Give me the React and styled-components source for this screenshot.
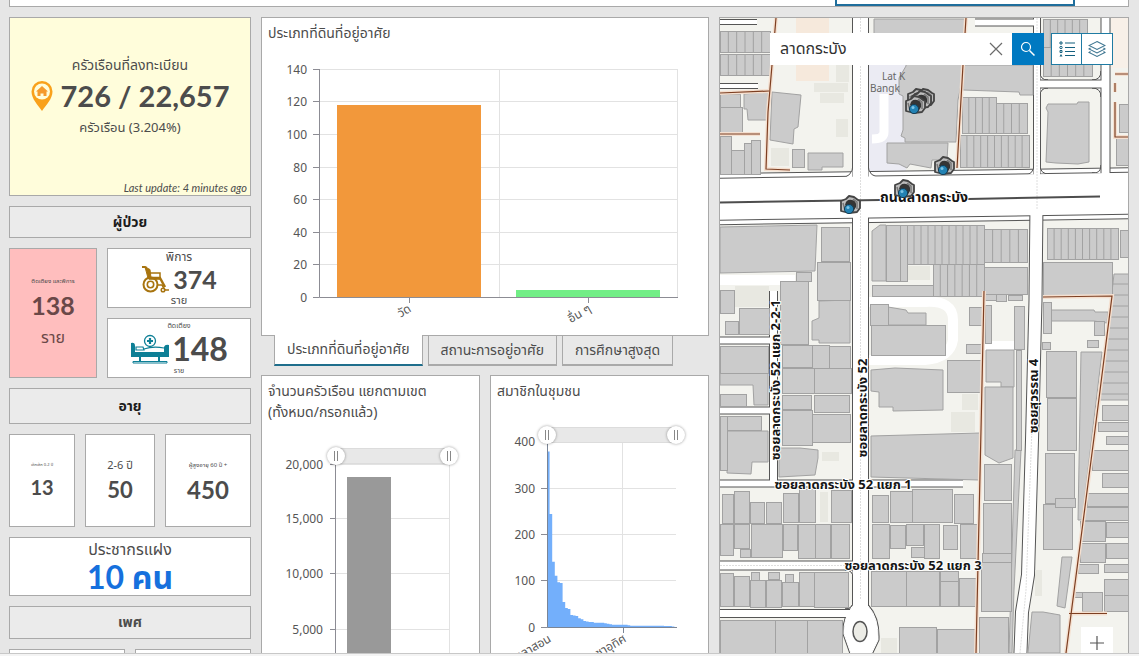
import React, { useState } from 'react';
import styled, { createGlobalStyle } from 'styled-components';

const GlobalStyle = createGlobalStyle`
  * { box-sizing: border-box; }
  body {
    margin: 0;
    background: #e6e6e6;
    color: #4c4c4c;
    font-family: 'Noto Sans', 'Noto Sans Thai', Tahoma, sans-serif;
    font-size: 14px;
  }
  button, input { font: inherit; color: inherit; }
`;

const Shell = styled.div`
  height: 100vh;
  display: flex;
  flex-direction: column;
  overflow: hidden;
`;

const TopBar = styled.header`
  flex: none;
  display: flex;
  justify-content: flex-end;
  height: 7px;
  margin: 0 10px 0 9px;
  padding-right: 53px;
  background: #fff;
  border: 1px solid #a9a9a9;
  border-top: none;
`;

const TopBarFrame = styled.div`
  width: 240px;
  border: 2px solid #1f6e9c;
  border-top: none;
`;

const BottomBar = styled.footer`
  flex: none;
  height: 3px;
  background: #f4f4f4;
  border-top: 1px solid #c8c8c8;
`;

const Board = styled.main`
  flex: 1;
  min-height: 0;
  display: grid;
  grid-template-columns: 242fr 448fr 410fr;
  grid-template-rows: 100%;
  gap: 10px;
  padding: 10px 10px 0 9px;
  overflow: hidden;
`;

const Column = styled.section`
  display: flex;
  flex-direction: column;
  gap: ${props => props.$gap}px;
  min-width: 0;
`;

const CardRow = styled.div`
  display: grid;
  flex: none;
  grid-template-columns: ${props => props.$columns};
  gap: 10px;
`;

const Card = styled.div`
  flex: none;
  display: flex;
  flex-direction: column;
  align-items: center;
  justify-content: center;
  min-height: ${props => props.$height}px;
  background: ${props => props.$fill || '#fff'};
  border: 1px solid #a9a9a9;
  overflow: hidden;
  white-space: nowrap;
`;

const AgeCard = styled(Card)`
  padding-bottom: 4px;
`;

const SectionHeading = styled.h2`
  flex: none;
  display: flex;
  align-items: center;
  justify-content: center;
  height: ${props => props.$height}px;
  margin: 0;
  background: #ebebeb;
  border: 1px solid #a9a9a9;
  color: ${props => props.$color || '#1c1c1c'};
  font-size: 14px;
  font-weight: 700;
`;

const CardBody = styled.div`
  flex: 1;
  display: flex;
  flex-direction: column;
  align-items: center;
  justify-content: center;
  padding-bottom: 6px;
`;

const Caption = styled.div`
  font-size: ${props => props.$size}px;
  line-height: ${props => props.$line}px;
  color: ${props => props.$color || 'inherit'};
`;

const Figure = styled.div`
  display: flex;
  align-items: center;
  gap: ${props => props.$gap || 4}px;
  color: ${props => props.$color || 'inherit'};
  font-family: Lato, 'Noto Sans Thai', Tahoma, sans-serif;
  font-size: ${props => props.$size}px;
  line-height: ${props => props.$line}px;
  font-weight: 700;
`;

const UpdatedAt = styled.div`
  align-self: flex-end;
  padding-right: 3px;
  font-family: Lato, sans-serif;
  font-size: 11px;
  font-style: italic;
  line-height: 15px;
`;

const Panel = styled.div`
  position: relative;
  flex: none;
  background: #fff;
  border: 1px solid #a9a9a9;
`;

const PanelTitle = styled.h3`
  margin: 0;
  height: ${props => props.$height}px;
  padding: 4px 6px 0;
  font-size: 14px;
  font-weight: 400;
  line-height: 21px;
`;

const Chart = styled.svg`
  display: block;
  width: 100%;
  font-family: 'Noto Sans', 'Noto Sans Thai', Tahoma, sans-serif;
  font-size: 12px;
  fill: #555;
`;

const TabList = styled.div`
  flex: none;
  position: relative;
  display: flex;
  gap: 5px;
  height: 31px;
  margin: -1px 0 9px;
  padding-left: 13px;
`;

const Tab = styled.button`
  padding: 0 12px;
  border: 0 solid #a9a9a9;
  border-width: ${props => (props.$active ? '0 1px 2px' : '1px 1px 2px')};
  border-bottom-color: ${props => (props.$active ? '#1f6e8c' : '#a9a9a9')};
  background: ${props => (props.$active ? '#fff' : '#e8e8e8')};
  font-size: 14px;
  white-space: nowrap;
  cursor: pointer;
`;

const ChartRow = styled.div`
  display: grid;
  grid-template-columns: 1fr 1fr;
  gap: 10px;
`;

const RangeTrack = styled.div`
  position: absolute;
  top: ${props => props.$top}px;
  left: ${props => props.$left}px;
  right: ${props => props.$right}px;
  height: 18px;

  &::before {
    content: '';
    position: absolute;
    inset: 1px 9px;
    background: #e8e8e8;
    border: 1px solid #dcdcdc;
  }
`;

const RangeInput = styled.input`
  position: absolute;
  inset: 0;
  width: 100%;
  height: 18px;
  margin: 0;
  appearance: none;
  background: transparent;
  pointer-events: none;

  &::-webkit-slider-thumb {
    appearance: none;
    width: 18px;
    height: 18px;
    border-radius: 50%;
    background:
      linear-gradient(#888, #888) 7px 4px / 1px 10px no-repeat,
      linear-gradient(#888, #888) 10px 4px / 1px 10px no-repeat,
      #fff;
    box-shadow: 0 0 3px rgba(0, 0, 0, 0.4);
    pointer-events: auto;
    cursor: pointer;
  }
`;

const MapFrame = styled.section`
  position: relative;
  min-width: 0;
  border: 1px solid #a9a9a9;
  border-bottom: none;
  overflow: hidden;
`;

const MapSvg = styled.svg`
  display: block;
  width: 100%;
  height: 100%;
`;

const MapTools = styled.div`
  position: absolute;
  top: 15px;
  right: 15px;
  display: flex;
  gap: 7px;
`;

const SearchForm = styled.form`
  display: flex;
  height: 32px;
  background: #fff;
`;

const SearchInput = styled.input`
  width: 210px;
  border: none;
  padding: 0 10px;
  background: transparent;
  outline: none;
  font-size: 16px;
  color: #323232;
`;

const IconButton = styled.button`
  display: flex;
  align-items: center;
  justify-content: center;
  width: ${props => props.$width || 32}px;
  height: 32px;
  padding: 0;
  border: ${props => (props.$outlined ? '1px solid #1f7ba3' : 'none')};
  background: ${props => (props.$primary ? '#0079c1' : '#fff')};
  cursor: pointer;

  & + & {
    border-left: none;
  }
`;

const ToolGroup = styled.div`
  display: flex;
`;

const ZoomButton = styled(IconButton)`
  position: absolute;
  right: 15px;
  bottom: -6px;
`;

const PinIcon = () => (
  <svg width="22" height="30" viewBox="0 0 22 30">
    <path d="M11 0a10.500 10.500 0 0 0-10.500 10.500C.5 18 7 24 11 30c4-6 10.500-12 10.500-19.500A10.500 10.500 0 0 0 11 0z" fill="#f9a11b" />
    <circle cx="11" cy="10.500" r="8" fill="#fffddb" />
    <path d="M11 5l6 5.500h-1.500V15h-3v-2.500h-3V15h-3v-4.500H5z" fill="#f59a2c" />
  </svg>
);

const WheelchairIcon = () => (
  <svg width="28" height="28" viewBox="0 0 28 28" fill="none" stroke="#a8740f">
    <path d="M1 2h3l2 1" strokeWidth="2" />
    <path d="M4 2l3 11h3L9 4.500z" fill="#a8740f" />
    <path d="M9 8h10v6H8" strokeWidth="1.500" />
    <path d="M7 13h13" strokeWidth="2.500" />
    <path d="M19 13l5 9" strokeWidth="2.500" />
    <circle cx="9.500" cy="19.500" r="7" strokeWidth="2" />
    <circle cx="9.500" cy="19.500" r="3.200" strokeWidth="1.600" />
    <path d="M16 20h5l3 5h4" strokeWidth="1.500" />
    <circle cx="22" cy="25" r="1.800" strokeWidth="1.500" />
  </svg>
);

const BedIcon = () => (
  <svg width="40" height="30" viewBox="0 0 40 30" fill="none" stroke="#0d7f96">
    <circle cx="20" cy="7" r="5.500" strokeWidth="1.300" />
    <path d="M20 4v6M17 7h6" strokeWidth="2.200" />
    <path d="M1 9q4-1 4 3v6h29v-5q1-3 5-2v12H1z" fill="#0d7f96" stroke="none" />
    <path d="M6 16v-3h7l1 3zM14 15q9-3 20-1" strokeWidth="1.200" />
    <path d="M10 23v4M29 23v4" strokeWidth="2" />
    <path d="M3 27.500h34v1.500H3z" strokeWidth="1" />
  </svg>
);

const CloseIcon = () => (
  <svg width="14" height="14" viewBox="0 0 14 14" stroke="#6b6b6b" strokeWidth="1.200">
    <path d="M1 1l12 12M13 1L1 13" />
  </svg>
);

const SearchIcon = () => (
  <svg width="16" height="16" viewBox="0 0 16 16" fill="none" stroke="#fff" strokeWidth="1.200">
    <circle cx="6" cy="6" r="4.500" />
    <path d="M9.500 9.500l5 5" strokeWidth="1.500" />
  </svg>
);

const LegendIcon = () => (
  <svg width="16" height="16" viewBox="0 0 16 16" fill="none" stroke="#14607f">
    <path d="M6 2h10M6 6.500h10M6 10.500h10M6 14.500h10" strokeWidth="1.100" />
    <path d="M1 1h2v2H1zM1 9.500h2v2H1z" />
    <circle cx="2" cy="6.500" r="1.200" />
    <path d="M.5 15.500L2 13l1.500 2.500z" fill="#14607f" stroke="none" />
  </svg>
);

const LayersIcon = () => (
  <svg width="18" height="18" viewBox="0 0 18 18" fill="none" stroke="#3d7590" strokeWidth="1.100">
    <path d="M9 1.500l8 4-8 4-8-4zM2.500 8L1 9l8 4 8-4-1.500-1M2.500 11.500L1 12.500l8 4 8-4-1.500-1" />
  </svg>
);

const PlusIcon = () => (
  <svg width="16" height="16" viewBox="0 0 16 16" stroke="#555" strokeWidth="1.200">
    <path d="M8 1v14M1 8h14" />
  </svg>
);

const LAND_TICKS = [0, 20, 40, 60, 80, 100, 120, 140];

const LandChart = () => {
  const y = value => Math.round(297 - value * 1.63);
  return (
    <Chart viewBox="262 50 446 285" role="img" aria-label="ประเภทที่ดินที่อยู่อาศัย">
      {LAND_TICKS.map(tick => (
        <g key={tick}>
          <path d={`M319 ${y(tick) + 0.5}H678`} stroke="#e2e2e2" />
          <path d={`M313 ${y(tick) + 0.5}h6`} stroke="#8c8c94" />
          <text x="307" y={y(tick) + 5} textAnchor="end">{tick}</text>
        </g>
      ))}
      <path d="M499.500 69V297M677.500 69V297" stroke="#e2e2e2" />
      <rect x="337" y="105" width="144" height="192" fill="#f2983b" />
      <rect x="516" y="290" width="144" height="7" fill="#72ee86" />
      <path d="M319.500 69V297.500H678M409.500 298v5M588.500 298v5" fill="none" stroke="#8c8c94" />
      <text transform="translate(412 311) rotate(-30)" textAnchor="end">วัด</text>
      <text transform="translate(592 311) rotate(-30)" textAnchor="end">อื่น ๆ</text>
    </Chart>
  );
};

const HOUSEHOLD_TICKS = [
  { label: '20,000', y: 464 },
  { label: '15,000', y: 518 },
  { label: '10,000', y: 573 },
  { label: '5,000', y: 629 },
];

const HouseholdChart = () => (
  <Chart viewBox="262 424 217 276" role="img" aria-label="จำนวนครัวเรือน แยกตามเขต">
    {HOUSEHOLD_TICKS.map(tick => (
      <g key={tick.label}>
        <path d={`M336 ${tick.y + 0.5}h113`} stroke="#e2e2e2" />
        <path d={`M330 ${tick.y + 0.5}h6`} stroke="#8c8c94" />
        <text x="323" y={tick.y + 5} textAnchor="end">{tick.label}</text>
      </g>
    ))}
    <path d="M449.500 464V684" stroke="#e2e2e2" />
    <rect x="347" y="477" width="44" height="207" fill="#999" />
    <path d="M335.500 464V684" stroke="#8c8c94" />
  </Chart>
);

const MEMBERS = [
  380, 245, 142, 112, 98, 96, 55, 42, 40, 27, 26, 25, 20, 18, 14, 13, 12, 12,
  10, 10, 10, 10, 9, 8, 7, 6, 6, 6, 6, 6, 6, 5, 4, 4, 4, 4, 4, 4, 4, 4, 4, 4,
  4, 4, 4, 3, 3, 3, 2, 1,
];

const MemberChart = () => {
  const y = value => 627.5 - value * 0.463;
  const area = MEMBERS.map((value, i) => `V${y(value)}H${547 + (i + 1) * 2.6}`).join('');
  return (
    <Chart viewBox="491 403 217 297" role="img" aria-label="สมาชิกในชุมชน">
      {[0, 100, 200, 300, 400].map(tick => (
        <g key={tick}>
          <path d={`M547 ${Math.round(y(tick)) - 0.5}h129`} stroke="#e2e2e2" />
          <path d={`M541 ${Math.round(y(tick)) - 0.5}h6`} stroke="#8c8c94" />
          <text x="535" y={Math.round(y(tick)) + 4} textAnchor="end">{tick}</text>
        </g>
      ))}
      <path d="M622.500 442V627" stroke="#e2e2e2" />
      <path d={`M547 627.5${area}V627.5z`} fill="#73affb" />
      <path d="M547.500 442V627.500H677M623.500 628v5" fill="none" stroke="#7a8596" />
      <text transform="translate(552 641) rotate(-30)" textAnchor="end">ศาลาสอน</text>
      <text transform="translate(627 641) rotate(-30)" textAnchor="end">ประชาอุทิศ</text>
    </Chart>
  );
};

// x, y, width, height
const BUILDINGS = [
  [720, 94, 20, 13], [720, 107, 22, 26], [720, 136, 11, 38], [731, 150, 13, 24], [744, 143, 7, 31], [751, 140, 9, 34],
  [792, 149, 12, 18], [1119, 104, 10, 28], [1116, 138, 13, 27],
  [821, 227, 28, 34], [817, 262, 33, 38], [796, 272, 15, 9], [780, 281, 28, 63], [720, 290, 14, 23],
  [739, 308, 30, 26], [725, 321, 13, 13], [720, 346, 48, 27], [720, 394, 26, 12], [782, 345, 30, 22],
  [812, 345, 17, 23], [829, 346, 21, 22], [782, 368, 32, 25], [814, 368, 37, 25], [782, 395, 29, 14],
  [814, 395, 35, 17], [720, 416, 7, 54], [727, 416, 34, 14], [782, 410, 30, 35], [812, 414, 38, 28],
  [886, 225, 14, 56], [900, 225, 7, 56], [872, 285, 61, 11], [984, 267, 43, 27], [985, 294, 11, 6],
  [996, 294, 10, 7], [1008, 295, 14, 5], [870, 304, 18, 21], [871, 325, 74, 30], [969, 307, 14, 18],
  [966, 344, 16, 9], [947, 360, 34, 32], [985, 305, 6, 38], [1014, 306, 10, 43], [1016, 350, 5, 100],
  [1120, 230, 9, 27], [1043, 262, 69, 34], [1043, 302, 8, 31], [1094, 321, 10, 14], [1087, 340, 11, 7],
  [1042, 342, 8, 7], [1046, 351, 30, 46], [1047, 398, 29, 52], [1102, 405, 27, 15], [1098, 422, 31, 9],
  [1106, 436, 23, 8], [1092, 450, 37, 20], [1102, 473, 27, 14], [1087, 493, 42, 13], [1084, 507, 45, 13],
  [1080, 521, 25, 20], [1106, 522, 23, 15], [1080, 543, 25, 19], [1106, 543, 23, 15], [1078, 564, 20, 9],
  [1104, 564, 25, 8], [1104, 579, 25, 16], [1072, 592, 10, 5], [1082, 592, 20, 19], [1104, 595, 25, 16],
  [1045, 453, 29, 50], [1043, 504, 29, 45], [1055, 498, 20, 9], [984, 464, 27, 36], [983, 503, 28, 50],
  [982, 553, 29, 9], [981, 562, 30, 49], [979, 617, 29, 36],
  [722, 494, 11, 29], [734, 491, 15, 32], [750, 502, 14, 21], [766, 502, 15, 21], [783, 493, 15, 29],
  [799, 489, 16, 33], [831, 490, 20, 32], [720, 524, 13, 31], [734, 524, 15, 24], [751, 524, 31, 33],
  [783, 524, 14, 26], [798, 524, 17, 34], [815, 524, 15, 34], [831, 524, 18, 34], [740, 549, 10, 8],
  [720, 573, 13, 33], [734, 576, 15, 30], [750, 580, 15, 27], [766, 580, 15, 27], [782, 582, 16, 24],
  [799, 572, 15, 34], [814, 572, 34, 35], [751, 572, 8, 8], [768, 572, 11, 7], [785, 574, 8, 8],
  [720, 620, 55, 33], [775, 620, 32, 33], [807, 620, 35, 33],
  [872, 495, 16, 27], [890, 491, 22, 31], [912, 489, 40, 33], [954, 494, 19, 29], [872, 524, 17, 34],
  [890, 525, 15, 23], [906, 524, 17, 21], [924, 524, 15, 34], [943, 525, 14, 24], [960, 524, 17, 34],
  [911, 547, 13, 10], [871, 571, 35, 35], [906, 571, 33, 35], [940, 571, 18, 10], [940, 581, 18, 25],
  [959, 578, 17, 28], [899, 627, 37, 26], [937, 629, 38, 24],
];

const OUTLINES = [
  '744,94 768,92 767,120 748,120 747,109 744,109',
  '772,92 801,95 798,127 794,129 793,144 770,140',
  '808,153 843,153 843,167 822,167 822,170 808,170',
  '874,19 966,19 964,70 958,100 956,142 905,142 905,138 901,136 903,130 903,96 899,94 899,78 906,66 906,34 874,34',
  '887,143 948,143 947,160 932,160 931,168 910,164 907,168 899,164 887,163',
  '964,65 1033,65 1033,95 1020,95 1019,92 963,90',
  '1048,104 1077,104 1078,102 1089,102 1089,162 1078,164 1056,163 1046,162 1048,112 1046,108',
  '720,227 817,225 815,271 720,273',
  '819,301 850,300 850,343 819,343 819,340 812,340 812,321 819,318',
  '720,373 768,373 768,405 754,405 753,385 720,385',
  '727,431 768,431 768,462 752,462 751,474 727,473',
  '779,448 800,448 818,450 818,458 815,475 779,477',
  '872,231 880,225 886,225 886,281 872,281',
  '888,307 906,310 908,313 926,313 926,325 888,325',
  '871,370 895,368 943,370 943,410 893,411 893,407 879,407 879,392 871,391',
  '871,436 980,433 979,480 871,477',
  '986,350 1014,350 1014,387 1001,387 1001,382 986,382',
  '985,387 1013,387 1013,458 999,463 985,455',
  '1015,450 1021,450 1014,590 1012,653 1009,653',
  '1051,310 1094,310 1095,312 1108,312 1107,323 1094,321 1051,321',
  '1081,352 1102,352 1082,520 1078,520',
  '1062,557 1072,557 1065,608 1057,606',
  '1032,612 1043,612 1060,615 1060,653 1028,653',
  '1114,274 1129,274 1129,400 1100,400',
];

const PALE_BUILDINGS = [
  [814, 83, 34, 9], [820, 93, 24, 10], [836, 119, 12, 18], [836, 65, 13, 17], [771, 148, 18, 18],
  [822, 452, 17, 9], [735, 286, 34, 21], [783, 354, 12, 13], [900, 266, 30, 14], [962, 394, 16, 16],
  [951, 412, 24, 20], [820, 492, 8, 30], [881, 638, 16, 15], [1035, 570, 7, 26],
];

// x, y, width, height, number of units in the block
const TERRACES = [
  [720, 31, 50, 21, 6], [720, 54, 50, 21, 6], [962, 97, 34, 36, 5], [996, 103, 31, 30, 4],
  [960, 135, 69, 32, 10], [1043, 19, 44, 28, 6], [1043, 47, 49, 29, 6], [907, 225, 77, 39, 11],
  [984, 229, 43, 33, 5], [933, 264, 51, 32, 7], [1047, 228, 71, 31, 10],
];

const ROADS = [
  { d: 'M860.5 0V622', width: 15 },
  { d: 'M1037 0V190', width: 6 },
  { d: 'M1105.5 0V185', width: 8 },
  { d: 'M1037 84H1105', width: 7 },
  { d: 'M710 22H757', width: 4 },
  { d: 'M710 86H758', width: 4 },
  { d: 'M975 22.5H1036', width: 6 },
  { d: 'M773.5 291V484', width: 7 },
  { d: 'M710 340.5H771', width: 6 },
  { d: 'M710 410.5H771', width: 6 },
  { d: 'M710 483.5H963', width: 6 },
  { d: 'M710 565.5H856', width: 8 },
  { d: 'M710 613.5H856', width: 7 },
  { d: 'M853 606Q843 618 844 634L855 665H866L878 640Q879 618 868 606z', width: 1, fill: '#fff' },
  { d: 'M1036.5 205L1035.5 300L1032 440L1028 575L1022 612L1020 665', width: 12 },
];

// road kerbs that turn at the junctions
const CORNERS = [
  'M839 178Q853 178 853 164V178z',
  'M868 164Q868 178 882 177L868 178z',
  'M1024 175Q1034 175 1034 164V175z',
  'M1040 165Q1040 174 1049 174H1040z',
  'M1101 165Q1101 174 1092 173L1101 174z',
  'M1040 96Q1040 88 1048 88H1040z',
  'M1092 88Q1101 88 1101 97V88z',
  'M1040 72Q1040 80 1048 80H1040z',
  'M1092 80Q1101 80 1101 71V80z',
  'M845 570Q853 570 853 578V570z',
  'M845 609Q853 609 853 601V609z',
];

const BOUNDARIES = [
  'M776 18L768 112L766 169L790 170', 'M720 93L769 91', 'M720 134H760', 'M966 18L963 65L957 168',
  'M1129 74H1115M1115 83V92M1115 102V137H1129', 'M984 291L981 430L976 653',
  'M1043 297L1112 296L1095 430L1066 653', 'M1069 613.5H1107',
];

const STREET_LABELS = [
  { text: 'ถนนลาดกระบัง', x: 924, y: 202, size: 14 },
  { text: 'ซอยลาดกระบัง 52 แยก 1', x: 843, y: 489 },
  { text: 'ซอยลาดกระบัง 52 แยก 3', x: 913, y: 570 },
  { text: 'ซอยลาดกระบัง 52 แยก 2-2-1', x: 780, y: 380, angle: -90 },
  { text: 'ซอยลาดกระบัง 52', x: 867, y: 408, angle: -90 },
  { text: 'ซอยสุวรรณ 4', x: 1038, y: 396, angle: -90 },
];

const Camera = ({ x, y }) => (
  <g transform={`translate(${x} ${y})`}>
    <path d="M-9-4l5-2 3-3 5 1 4 3 2 1v7l-3 4-8 1-8-2z" fill="#bdbdbd" stroke="#444" strokeWidth="1.800" strokeLinejoin="round" />
    <path d="M-7-2l2 7M3-6l4 3v7" fill="none" stroke="#777" strokeWidth="1.500" />
    <path d="M-5 0q1-6 7-5 5 1 4 7L3 7z" fill="#353535" />
    <circle cx="-1" cy="4" r="4.600" fill="#2382b3" stroke="#173e55" />
    <circle cx="-2" cy="2.500" r="1.500" fill="#7cc4e6" />
  </g>
);

const StreetMap = () => (
  <MapSvg viewBox="720 18 409 635" preserveAspectRatio="xMinYMin slice" role="img" aria-label="แผนที่ลาดกระบัง">
    <rect x="700" y="0" width="450" height="680" fill="#f3f3ee" />
    <rect x="796" y="18" width="33" height="63" fill="#f6e9dc" />
    <rect x="868" y="34" width="38" height="140" fill="#ebebf3" />
    <path d="M884 94v38q0 7-12 7" fill="none" stroke="#fff" strokeWidth="9" />
    <path d="M1111 18h18v50h-18z" fill="#f8f0e8" />
    <g fill="none" stroke="#fff" strokeWidth="10">
      <path d="M720 280H795M868 302H925Q953 300 953 320V340Q950 358 925 360H868M984 346H1014" />
    </g>
    <g fill="none">
      <path d="M700 199.500L1150 193" stroke="#555" strokeWidth="52" />
      <path d="M700 199.500L1150 193" stroke="#fff" strokeWidth="50" />
      <path d="M700 199.500L1150 193" stroke="#555" strokeWidth="43" />
      {ROADS.map(road => (
        <path key={road.d} d={road.d} stroke="#555" strokeWidth={road.width + 2} />
      ))}
      {CORNERS.map(d => <path key={d} d={d} fill="#fff" stroke="#555" />)}
      {ROADS.map(road => (
        <path key={road.d} d={road.d} stroke="#fff" strokeWidth={road.width} fill={road.fill || 'none'} />
      ))}
      <path d="M700 199.500L1150 193" stroke="#fff" strokeWidth="41" />
      <path d="M860.500 18V600M1037 18V210M720 565.500H850M1033 400L1026 590L1020 653" stroke="#dedede" strokeDasharray="2 1" />
      <path d="M720 202.500L880 200M968 199L1100 196.500" stroke="#4d4d4d" strokeWidth="2" />
      <ellipse cx="860" cy="631.500" rx="7" ry="10" fill="#ecece6" stroke="#555" strokeWidth="1.500" />
    </g>
    <g fill="#e8e8e1">
      {PALE_BUILDINGS.map(([x, y, w, h]) => (
        <rect key={`${x}-${y}`} x={x} y={y} width={w} height={h} />
      ))}
    </g>
    <g fill="#cbcbcb" stroke="#a2a2a2" strokeWidth="1">
      {OUTLINES.map(points => <polygon key={points} points={points} />)}
      {BUILDINGS.map(([x, y, w, h]) => (
        <rect key={`${x}-${y}`} x={x + 0.5} y={y + 0.5} width={w} height={h} />
      ))}
      {TERRACES.map(([x, y, w, h, count]) => (
        <g key={`${x}-${y}`}>
          <rect x={x + 0.5} y={y + 0.5} width={w} height={h} />
          {Array.from({ length: count - 1 }, (_, i) => (
            <path key={i} d={`M${x + ((i + 1) * w) / count} ${y}v${h}`} />
          ))}
        </g>
      ))}
      {Array.from({ length: 11 }, (_, i) => (
        <path key={i} d={`M${1113 - i * 1.2} ${284 + i * 11}L1129 ${284 + i * 11}`} />
      ))}
    </g>
    <g fill="none">
      {BOUNDARIES.map(d => <path key={d} d={d} stroke="#f5e0d0" strokeWidth="4" />)}
      {BOUNDARIES.map(d => <path key={d} d={d} stroke="#7d3f22" strokeWidth="1.200" />)}
    </g>
    <g fontFamily="'Noto Sans', sans-serif" fontSize="10" fill="#666">
      <text x="882" y="80">Lat K</text>
      <text x="870" y="92">Bangk</text>
    </g>
    <g
      fontFamily="'Noto Sans', 'Noto Sans Thai', Tahoma, sans-serif"
      fontWeight="700"
      fill="#151515"
      stroke="#fff"
      strokeWidth="2"
      paintOrder="stroke"
      textAnchor="middle"
    >
      {STREET_LABELS.map(label => (
        <text
          key={label.text}
          fontSize={label.size || 13}
          transform={`translate(${label.x} ${label.y}) rotate(${label.angle || 0})`}
        >
          {label.text}
        </text>
      ))}
    </g>
    <Camera x={917} y={98} />
    <Camera x={924} y={98} />
    <Camera x={921} y={100} />
    <Camera x={915} y={105} />
    <Camera x={944} y={166} />
    <Camera x={904} y={189} />
    <Camera x={850} y={205} />
  </MapSvg>
);

const RangeSlider = ({ top, left, right, label }) => {
  const [range, setRange] = useState([0, 100]);
  return (
    <RangeTrack $top={top} $left={left} $right={right}>
      <RangeInput
        type="range"
        aria-label={`${label} เริ่มต้น`}
        value={range[0]}
        onChange={(e) => setRange([Number(e.target.value), range[1]])}
      />
      <RangeInput
        type="range"
        aria-label={`${label} สิ้นสุด`}
        value={range[1]}
        onChange={(e) => setRange([range[0], Number(e.target.value)])}
      />
    </RangeTrack>
  );
};

const TABS = ['ประเภทที่ดินที่อยู่อาศัย', 'สถานะการอยู่อาศัย', 'การศึกษาสูงสุด'];

const App = () => {
  const [tab, setTab] = useState(0);
  const [query, setQuery] = useState('ลาดกระบัง');

  return (
    <Shell>
      <GlobalStyle />
      <TopBar>
        <TopBarFrame />
      </TopBar>
      <Board>
        <Column $gap={10}>
          <Card $height={179} $fill="#fffddb">
            <CardBody>
              <Caption $size={14} $line={26}>ครัวเรือนที่ลงทะเบียน</Caption>
              <Figure $size={29} $line={36} $gap={8}><PinIcon />726 / 22,657</Figure>
              <Caption $size={13} $line={26}>ครัวเรือน (3.204%)</Caption>
            </CardBody>
            <UpdatedAt>Last update: 4 minutes ago</UpdatedAt>
          </Card>
          <SectionHeading $height={32}>ผู้ป่วย</SectionHeading>
          <CardRow $columns="88fr 144fr">
            <Card $height={130} $fill="#ffbebe">
              <Caption $size={6} $line={12}>ติดเตียง และพิการ</Caption>
              <Figure $size={25} $line={36} $color="#6a4848">138</Figure>
              <Caption $size={16} $line={28} $color="#6a4848">ราย</Caption>
            </Card>
            <Column $gap={10}>
              <Card $height={60}>
                <Caption $size={12} $line={16}>พิการ</Caption>
                <Figure $size={25} $line={28}><WheelchairIcon />374</Figure>
                <Caption $size={11} $line={14}>ราย</Caption>
              </Card>
              <Card $height={60}>
                <Caption $size={7} $line={12}>ติดเตียง</Caption>
                <Figure $size={32} $line={34} $gap={2}><BedIcon />148</Figure>
                <Caption $size={7} $line={10}>ราย</Caption>
              </Card>
            </Column>
          </CardRow>
          <SectionHeading $height={36}>อายุ</SectionHeading>
          <CardRow $columns="66fr 70fr 86fr">
            <AgeCard $height={93}>
              <Caption $size={4} $line={16}>เด็กเล็ก 0-2 ปี</Caption>
              <Figure $size={20} $line={28}>13</Figure>
            </AgeCard>
            <AgeCard $height={93}>
              <Caption $size={11} $line={22}>2-6 ปี</Caption>
              <Figure $size={22} $line={28}>50</Figure>
            </AgeCard>
            <AgeCard $height={93}>
              <Caption $size={6} $line={22}>ผู้สูงอายุ 60 ปี +</Caption>
              <Figure $size={24} $line={28}>450</Figure>
            </AgeCard>
          </CardRow>
          <Card $height={59}>
            <Caption $size={16} $line={20}>ประชากรแฝง</Caption>
            <Figure $size={32} $line={36} $color="#1670dd">10 คน</Figure>
          </Card>
          <SectionHeading $height={33} $color="#4c4c4c">เพศ</SectionHeading>
          <CardRow $columns="116fr 116fr">
            <Card $height={60} />
            <Card $height={60} />
          </CardRow>
        </Column>

        <Column $gap={0}>
          <Panel>
            <PanelTitle $height={32}>ประเภทที่ดินที่อยู่อาศัย</PanelTitle>
            <LandChart />
          </Panel>
          <TabList role="tablist">
            {TABS.map((name, i) => (
              <Tab
                key={name}
                type="button"
                role="tab"
                aria-selected={tab === i}
                $active={tab === i}
                onClick={() => setTab(i)}
              >
                {name}
              </Tab>
            ))}
          </TabList>
          <ChartRow>
            <Panel>
              <PanelTitle $height={48}>จำนวนครัวเรือน แยกตามเขต<br />(ทั้งหมด/กรอกแล้ว)</PanelTitle>
              <HouseholdChart />
              <RangeSlider top={71} left={65} right={21} label="จำนวนครัวเรือน" />
            </Panel>
            <Panel>
              <PanelTitle $height={27}>สมาชิกในชุมชน</PanelTitle>
              <MemberChart />
              <RangeSlider top={50} left={47} right={23} label="สมาชิกในชุมชน" />
            </Panel>
          </ChartRow>
        </Column>

        <MapFrame>
          <StreetMap />
          <MapTools>
            <SearchForm onSubmit={(e) => e.preventDefault()}>
              <SearchInput
                type="text"
                aria-label="ค้นหา"
                value={query}
                onChange={(e) => setQuery(e.target.value)}
              />
              <IconButton type="button" aria-label="ล้าง" onClick={() => setQuery('')}><CloseIcon /></IconButton>
              <IconButton type="submit" aria-label="ค้นหา" $primary><SearchIcon /></IconButton>
            </SearchForm>
            <ToolGroup>
              <IconButton type="button" aria-label="คำอธิบายสัญลักษณ์" $outlined $width={31}><LegendIcon /></IconButton>
              <IconButton type="button" aria-label="ชั้นข้อมูล" $outlined $width={31}><LayersIcon /></IconButton>
            </ToolGroup>
          </MapTools>
          <ZoomButton type="button" aria-label="ขยาย"><PlusIcon /></ZoomButton>
        </MapFrame>
      </Board>
      <BottomBar />
    </Shell>
  );
};

export default App;
